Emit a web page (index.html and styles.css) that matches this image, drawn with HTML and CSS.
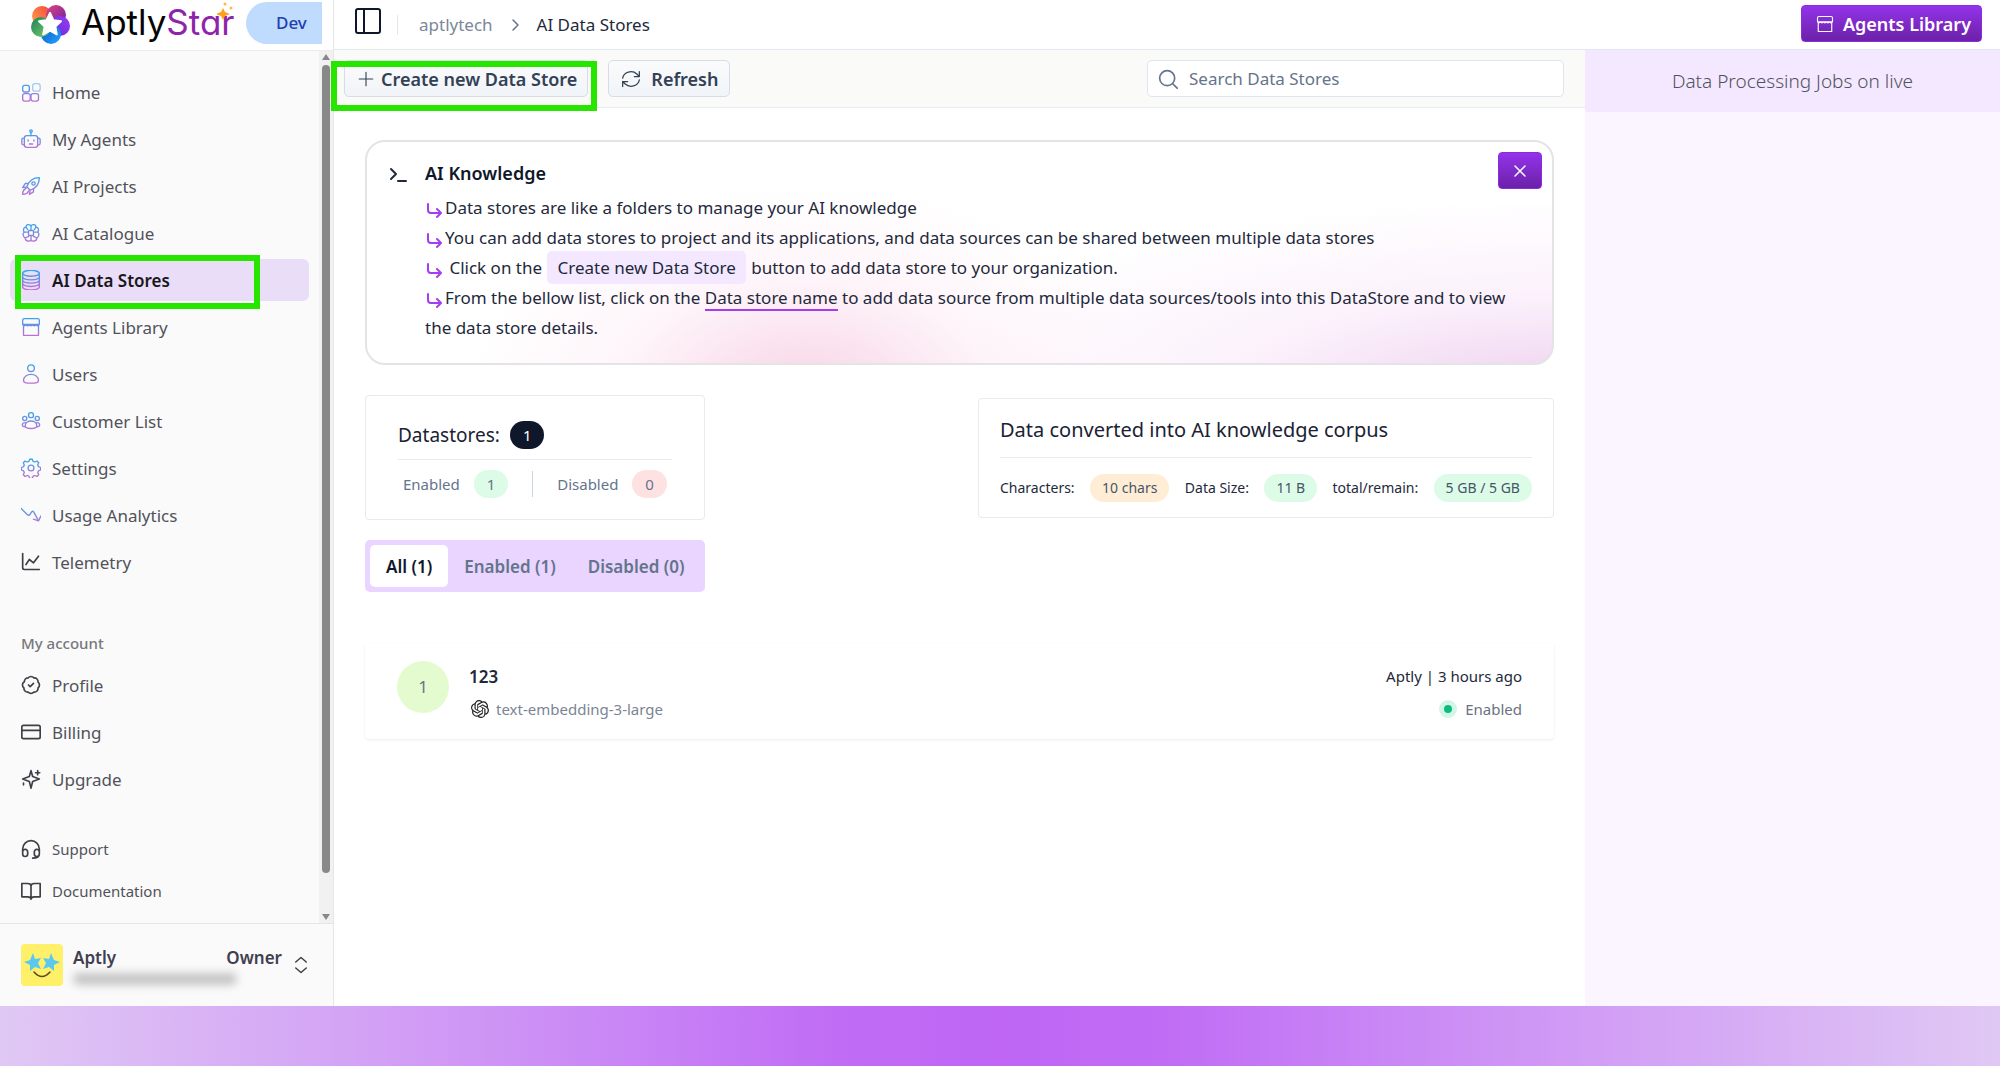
FILE: index.html
```html
<!DOCTYPE html>
<html lang="en">
<head>
    <meta charset="UTF-8">
    <meta name="viewport" content="width=device-width, initial-scale=1.0">
    <title>AI Data Stores - AptlyStar</title>
    <link rel="stylesheet" href="styles.css">
</head>
<body>
    <!-- shared gradient + icon used twice -->
    <svg class="defs" width="0" height="0" aria-hidden="true">
        <defs>
            <linearGradient id="grad" gradientUnits="userSpaceOnUse" x1="12" y1="1" x2="12" y2="23">
                <stop offset="0" stop-color="#2fa8ee"/>
                <stop offset="1" stop-color="#c06fd0"/>
            </linearGradient>
        </defs>
        <symbol id="shop" viewBox="0 0 24 24">
            <path d="M3 10v12h18V10M4 2h16a2 2 0 0 1 2 2v5H2V4a2 2 0 0 1 2-2zM2 9c1 2 3 2 4 0 1 2 3 2 4 0 1 2 3 2 4 0 1 2 3 2 4 0 1 2 3 2 4 0"/>
        </symbol>
    </svg>

    <div class="app">
        <aside class="sidebar">
            <div class="brand">
                <svg class="logo" viewBox="0 0 40 40" aria-hidden="true">
                    <defs>
                        <linearGradient id="l1" x1="0" y1="1" x2="1" y2="0"><stop offset="0" stop-color="#ffa64d"/><stop offset="1" stop-color="#f4433c"/></linearGradient>
                        <linearGradient id="l2" x1="0" y1="0" x2="1" y2="1"><stop offset="0" stop-color="#e0457b"/><stop offset="1" stop-color="#6a1fa8"/></linearGradient>
                        <linearGradient id="l3" x1="1" y1="0" x2="0" y2="1"><stop offset="0" stop-color="#a03af0"/><stop offset="1" stop-color="#5a2be0"/></linearGradient>
                        <linearGradient id="l4" x1="0" y1="0" x2="1" y2="1"><stop offset="0" stop-color="#0a4fc4"/><stop offset="1" stop-color="#22a8ff"/></linearGradient>
                        <linearGradient id="l5" x1="0" y1="0" x2="1" y2="1"><stop offset="0" stop-color="#1b7f5c"/><stop offset="1" stop-color="#7fd06a"/></linearGradient>
                    </defs>
                    <circle cx="12" cy="12" r="10" fill="url(#l1)"/>
                    <circle cx="26" cy="11" r="10" fill="url(#l2)"/>
                    <circle cx="30" cy="22" r="10" fill="url(#l3)"/>
                    <circle cx="21" cy="30" r="10" fill="url(#l4)"/>
                    <circle cx="11" cy="23" r="10" fill="url(#l5)"/>
                    <path fill="#fff" stroke="#fff" stroke-width="2" stroke-linejoin="round" d="M20 9l3.4 7.2 7.6 1-5.6 5.4 1.4 7.8-6.8-3.8-6.8 3.8 1.4-7.8L9 17.2l7.6-1z"/>
                </svg>
                <span class="wordmark">Aptly<b>Star</b>
                    <svg class="sparkle" viewBox="0 0 18 18" aria-hidden="true"><path fill="#ff9f1c" d="M6 6l2 4 5 2-5 2-2 4-2-4-5-2 5-2z"/><circle cx="8" cy="2" r="1.5" fill="#ffb74d"/><circle cx="14" cy="6" r="1.5" fill="#ffb74d"/></svg>
                </span>
                <span class="env">Dev</span>
            </div>

            <div class="scroll">
                <nav class="menu">
                    <a href="#"><svg class="icon g" viewBox="0 0 24 24"><rect x="2" y="4" width="8" height="8" rx="2.5"/><rect x="2" y="14" width="9" height="9" rx="2.5"/><rect x="12" y="14" width="9" height="9" rx="2.5"/><rect x="14" y="2" width="9" height="9" rx="3" opacity=".5"/></svg>Home</a>
                    <a href="#"><svg class="icon g" viewBox="0 0 24 24"><rect x="4" y="8" width="16" height="14" rx="3"/><path d="M12 8V4M4 11H3a2 2 0 0 0-2 2v4a2 2 0 0 0 2 2h1M20 11h1a2 2 0 0 1 2 2v4a2 2 0 0 1-2 2h-1M8.5 13v1.5M15.5 13v1.5M10 18h4"/><circle cx="12" cy="2.5" r="1.5"/></svg>My Agents</a>
                    <a href="#"><svg class="icon g" viewBox="0 0 24 24"><path d="M7 13c2-6 7-11 15-11 0 8-5 13-11 15zM9 9H5l-3 5 5-1M15 15v4l-5 3 1-5M6 15c-3 1-4 4-4 7 3 0 6-1 7-4"/><circle cx="15" cy="9" r="2"/></svg>AI Projects</a>
                    <a href="#"><svg class="icon g" viewBox="0 0 24 24"><path d="M12 4C11 1 6 1 6 5c-3 0-4 4-2 6-3 2-1 6 1 7 0 4 6 5 7 2 1 3 7 2 7-2 2-1 4-5 1-7 2-2 1-6-2-6 0-4-5-4-6-1zM12 4v4M12 16v4M6 5l2 3M18 5l-2 3M4 11h4M20 11h-4M5 18l4-2M19 18l-4-2"/><rect x="9" y="9" width="6" height="6" rx="1"/></svg>AI Catalogue</a>
                    <a href="#" class="active"><svg class="icon g" viewBox="0 0 24 24"><ellipse cx="12" cy="4" rx="10" ry="3.5"/><path d="M2 4v16c0 5 20 5 20 0V4M2 8c0 5 20 5 20 0M2 12c0 5 20 5 20 0M2 16c0 5 20 5 20 0"/></svg>AI Data Stores<span class="mark"></span></a>
                    <a href="#"><svg class="icon g"><use href="#shop"/></svg>Agents Library</a>
                    <a href="#"><svg class="icon g" viewBox="0 0 24 24"><circle cx="12" cy="5" r="4"/><path d="M3 20c0-10 18-10 18 0 0 4-18 4-18 0z"/></svg>Users</a>
                    <a href="#"><svg class="icon g" viewBox="0 0 24 24"><circle cx="12" cy="5" r="3"/><circle cx="4.5" cy="9" r="2.5"/><circle cx="19.5" cy="9" r="2.5"/><path d="M5 18c0-8 14-8 14 0 0 4-14 4-14 0zM5 14c-4 0-5 5 0 5M19 14c4 0 5 5 0 5"/></svg>Customer List</a>
                    <a href="#"><svg class="icon g" viewBox="0 0 24 24"><path d="M9.5 4l1-2.5h3l1 2.5 2 .8 2.7-1.1 2 2-1.1 2.7.8 2 2.6 1v3l-2.6 1-.8 2 1.1 2.7-2 2-2.7-1.1-2 .8-1 2.7h-3l-1-2.7-2-.8-2.7 1.1-2-2 1.1-2.7-.8-2-2.6-1v-3l2.6-1 .8-2-1.1-2.7 2-2 2.7 1.1z"/><circle cx="12" cy="12" r="3.5"/></svg>Settings</a>
                    <a href="#"><svg class="icon g" viewBox="0 0 24 24"><path d="M0 4l8 8q2 1 3-1l2-3q1-1 2 0l5 9M15 17l6 2 3-6"/></svg>Usage Analytics</a>
                    <a href="#"><svg class="icon" viewBox="0 0 24 24"><path d="M2 2v17a2 2 0 0 0 2 2h18M6 15l4-6 5 4 6-8"/></svg>Telemetry</a>
                </nav>

                <h2>My account</h2>
                <nav class="menu">
                    <a href="#"><svg class="icon" viewBox="0 0 24 24"><path d="M4 8a4.500 4.500 0 0 1 4.500-4.500 4.500 4.500 0 0 1 7 0A4.500 4.500 0 0 1 20.500 8.500a4.500 4.500 0 0 1 0 7 4.500 4.500 0 0 1-5 5 4.500 4.500 0 0 1-7 0 4.500 4.500 0 0 1-5-5A4.500 4.500 0 0 1 4 8zM9 12l2 2 4-4"/></svg>Profile</a>
                    <a href="#"><svg class="icon" viewBox="0 0 24 24"><rect x="1" y="4" width="22" height="16" rx="2"/><path d="M1 10h22"/></svg>Billing</a>
                    <a href="#"><svg class="icon" viewBox="0 0 24 24"><path d="M12 2l2 7 8 3-8 3-2 8-2-8-8-3 8-3zM20 2v5M17.5 4.5h5M3 17v2"/></svg>Upgrade</a>
                </nav>
                <nav class="menu small">
                    <a href="#"><svg class="icon" viewBox="0 0 24 24"><path d="M2 12a10 10 0 0 1 20 0v6a3 3 0 0 1-6 0v-2a3 3 0 0 1 6-1M2 12v6a3 3 0 0 0 6 0v-2a3 3 0 0 0-6-1M22 18c0 3-3 5-8 5"/></svg>Support</a>
                    <a href="#"><svg class="icon" viewBox="0 0 24 24"><path d="M12 6c0-2-2-3-4-3H1v16h7c2 0 4 1 4 3 0-2 2-3 4-3h7V3h-7c-2 0-4 1-4 3zv16"/></svg>Documentation</a>
                </nav>
                <div class="scrollbar" aria-hidden="true"><i class="up"></i><i class="thumb"></i><i class="down"></i></div>
            </div>

            <div class="user">
                <svg class="avatar" viewBox="0 0 42 42" aria-hidden="true">
                    <rect width="42" height="42" rx="4" fill="#fff06a"/>
                    <g fill="#5cc8ef"><path d="M12 9l2 6 6-1-3 5 3 6-6-2-5 4v-6l-6-3 6-2z"/><path d="M30 9l-2 6-6-1 3 5-3 6 6-2 5 4v-6l6-3-6-2z"/></g>
                    <path d="M13 28q8 9 16 0" fill="none" stroke="#5c4a1c" stroke-width="1.5"/>
                </svg>
                <div class="who">
                    <div class="names"><span>Aptly</span><span>Owner</span></div>
                    <div class="hidden-mail"></div>
                </div>
                <svg class="icon" viewBox="0 0 24 24"><path d="M5 8l7-6 7 6M5 16l7 6 7-6"/></svg>
            </div>
        </aside>

        <div class="page">
            <header class="topbar">
                <button class="toggle" aria-label="Toggle sidebar"><svg viewBox="0 0 28 28"><rect x="2" y="2" width="24" height="24" rx="2"/><path d="M10 2v24"/></svg></button>
                <div class="crumbs">
                    <a href="#">aptlytech</a>
                    <svg viewBox="0 0 12 12"><path d="M4 1l5 5-5 5"/></svg>
                    <span>AI Data Stores</span>
                </div>
                <button class="purple library"><svg><use href="#shop"/></svg>Agents Library</button>
            </header>

            <div class="columns">
                <main>
                    <div class="toolbar">
                        <button class="btn create"><svg viewBox="0 0 24 24"><path d="M12 3v18M3 12h18"/></svg>Create new Data Store<span class="mark"></span></button>
                        <button class="btn refresh"><svg viewBox="0 0 24 24"><path d="M22 3v6h-6M2 21v-6h6M2 11a10 9 0 0 1 17-5l3 3M22 13a10 9 0 0 1-17 5l-3-3"/></svg>Refresh</button>
                        <div class="search">
                            <label for="q" aria-label="Search Data Stores"><svg viewBox="0 0 24 24"><circle cx="11" cy="11" r="9"/><path d="M18 18l5 5"/></svg></label>
                            <input type="text" id="q" placeholder="Search Data Stores">
                        </div>
                    </div>

                    <div class="content">
                        <section class="banner">
                            <svg class="prompt" viewBox="0 0 18 18"><path d="M2 3l5 5-5 5M9 15h8"/></svg>
                            <div class="tips">
                                <h1>AI Knowledge</h1>
                                <p><svg viewBox="0 0 16 16"><path d="M2 1v6a3 3 0 0 0 3 3h9M11 6l4 4-4 4"/></svg>Data stores are like a folders to manage your AI knowledge</p>
                                <p><svg viewBox="0 0 16 16"><path d="M2 1v6a3 3 0 0 0 3 3h9M11 6l4 4-4 4"/></svg>You can add data stores to project and its applications, and data sources can be shared between multiple data stores</p>
                                <p><svg viewBox="0 0 16 16"><path d="M2 1v6a3 3 0 0 0 3 3h9M11 6l4 4-4 4"/></svg> Click on the <span class="chip">Create new Data Store</span> button to add data store to your organization.</p>
                                <p><svg viewBox="0 0 16 16"><path d="M2 1v6a3 3 0 0 0 3 3h9M11 6l4 4-4 4"/></svg>From the bellow list, click on the <span class="under">Data store name</span> to add data source from multiple data sources/tools into this DataStore and to view the data store details.</p>
                            </div>
                            <button class="purple close" aria-label="Close"><svg viewBox="0 0 14 14"><path d="M2 2l10 10M12 2L2 12"/></svg></button>
                        </section>

                        <div class="stats">
                            <section class="card counts">
                                <div class="title">Datastores: <span class="pill dark">1</span></div>
                                <div class="row">
                                    <span>Enabled</span><span class="pill green">1</span>
                                    <i></i>
                                    <span>Disabled</span><span class="pill red">0</span>
                                </div>
                            </section>
                            <section class="card corpus">
                                <div class="title">Data converted into AI knowledge corpus</div>
                                <div class="row">
                                    <span>Characters:</span><span class="pill orange">10 chars</span>
                                    <span>Data Size:</span><span class="pill green">11 B</span>
                                    <span>total/remain:</span><span class="pill green">5 GB / 5 GB</span>
                                </div>
                            </section>
                        </div>

                        <div class="tabs">
                            <button class="on">All (1)</button>
                            <button>Enabled (1)</button>
                            <button>Disabled (0)</button>
                        </div>

                        <article class="store">
                            <span class="num">1</span>
                            <div class="info">
                                <a href="#">123</a>
                                <div class="model">
                                    <svg viewBox="0 0 24 24"><path d="M22.2819 9.8211a5.9847 5.9847 0 0 0-.5157-4.9108 6.0462 6.0462 0 0 0-6.5098-2.9A6.0651 6.0651 0 0 0 4.9807 4.1818a5.9847 5.9847 0 0 0-3.9977 2.9 6.0462 6.0462 0 0 0 .7427 7.0966 5.98 5.98 0 0 0 .511 4.9107 6.051 6.051 0 0 0 6.5146 2.9001A5.9847 5.9847 0 0 0 13.2599 24a6.0557 6.0557 0 0 0 5.7718-4.2058 5.9894 5.9894 0 0 0 3.9977-2.9001 6.0557 6.0557 0 0 0-.7475-7.0729zm-9.022 12.6081a4.4755 4.4755 0 0 1-2.8764-1.0408l.1419-.0804 4.7783-2.7582a.7948.7948 0 0 0 .3927-.6813v-6.7369l2.02 1.1686a.071.071 0 0 1 .038.052v5.5826a4.504 4.504 0 0 1-4.4945 4.4944zm-9.6607-4.1254a4.4708 4.4708 0 0 1-.5346-3.0137l.142.0852 4.783 2.7582a.7712.7712 0 0 0 .7806 0l5.8428-3.3685v2.3324a.0804.0804 0 0 1-.0332.0615L9.74 19.9502a4.4992 4.4992 0 0 1-6.1408-1.6464zM2.3408 7.8956a4.485 4.485 0 0 1 2.3655-1.9728V11.6a.7664.7664 0 0 0 .3879.6765l5.8144 3.3543-2.0201 1.1685a.0757.0757 0 0 1-.071 0l-4.8303-2.7865A4.504 4.504 0 0 1 2.3408 7.872zm16.5963 3.8558L13.1038 8.364 15.1192 7.2a.0757.0757 0 0 1 .071 0l4.8303 2.7913a4.4944 4.4944 0 0 1-.6765 8.1042v-5.6772a.79.79 0 0 0-.407-.667zm2.0107-3.0231l-.142-.0852-4.7735-2.7818a.7759.7759 0 0 0-.7854 0L9.409 9.2297V6.8974a.0662.0662 0 0 1 .0284-.0615l4.8303-2.7866a4.4992 4.4992 0 0 1 6.6802 4.66zM8.3065 12.863l-2.02-1.1638a.0804.0804 0 0 1-.038-.0567V6.0742a4.4992 4.4992 0 0 1 7.3757-3.4537l-.142.0805L8.704 5.459a.7948.7948 0 0 0-.3927.6813zm1.0976-2.3654l2.602-1.4998 2.6069 1.4998v2.9994l-2.5974 1.4997-2.6067-1.4997Z"/></svg>
                                    text-embedding-3-large
                                </div>
                            </div>
                            <div class="meta">
                                <div>Aptly | 3 hours ago</div>
                                <div class="state"><i></i>Enabled</div>
                            </div>
                        </article>
                    </div>
                </main>

                <aside class="jobs">
                    <h2>Data Processing Jobs on live</h2>
                </aside>
            </div>
        </div>
    </div>
    <footer class="strip"></footer>
</body>
</html>
```

FILE: styles.css
```css
* { box-sizing: border-box; }
body {
    margin: 0;
    min-height: 100vh;
    display: flex;
    flex-direction: column;
    font-family: "Noto Sans", "Open Sans", sans-serif;
    font-size: 17px;
    color: #1e293b;
    background: #fff;
}
h1, h2, p { margin: 0; }
a { color: inherit; text-decoration: none; }
button { font: inherit; cursor: pointer; }
svg { fill: none; stroke: currentColor; stroke-width: 2; stroke-linecap: round; stroke-linejoin: round; flex: none; }
.defs { position: absolute; }
.app { flex: 1; display: flex; }

/* green frames round the highlighted controls */
.mark { position: absolute; border: 6px solid #26e600; z-index: 5; pointer-events: none; }

/* sidebar */
.sidebar {
    width: 334px;
    flex: none;
    display: flex;
    flex-direction: column;
    background: #fafafa;
    border-right: 1px solid #e5e7eb;
}
.brand {
    height: 51px;
    display: flex;
    align-items: flex-start;
    padding-left: 30px;
    background: #fff;
    border-bottom: 1px solid #ececec;
}
.logo { width: 40px; height: 40px; margin-top: 4px; stroke: none; }
.wordmark {
    position: relative;
    flex: 1;
    margin-left: 11px;
    font-family: Inter, sans-serif;
    font-feature-settings: "cv11";
    font-size: 35px;
    line-height: 44px;
    color: #050505;
}
.wordmark b { font-weight: 400; color: #8e24aa; }
.sparkle { position: absolute; left: 136px; top: 2px; width: 18px; height: 18px; stroke: none; }
.env {
    width: 76px;
    height: 42px;
    margin: 2px 11px 0 0;
    padding-left: 30px;
    line-height: 42px;
    border-radius: 21px 0 0 21px;
    background: #bfdbfe;
    color: #1e40af;
    font-weight: 500;
}
.scroll { flex: 1; position: relative; padding: 20px 24px 0 10px; }
.menu { display: flex; flex-direction: column; gap: 5px; }
.menu a {
    position: relative;
    display: flex;
    align-items: center;
    gap: 11px;
    height: 42px;
    padding-left: 11px;
    border-radius: 6px;
    color: #52525b;
}
.icon { width: 20px; height: 20px; color: #3f3f46; }
.g { stroke: url(#grad); stroke-width: 1.6; }
.menu a.active { background: #eaddf7; color: #18181b; font-weight: 600; }
.menu .mark { inset: -4px 49px -8px 5px; }
.scroll h2 { margin: 45px 0 6px 11px; font-size: 15px; font-weight: 500; line-height: 30px; color: #77777d; }
.small { margin-top: 28px; gap: 0; }
.small a { font-size: 15px; }
.scrollbar {
    position: absolute;
    inset: 0 0 0 auto;
    width: 14px;
    padding: 3px 0;
    display: flex;
    flex-direction: column;
    align-items: center;
    background: #f1f1f1;
}
.up { border: 4px solid transparent; border-top: 0; border-bottom: 6px solid #888; }
.down { border: 4px solid transparent; border-bottom: 0; border-top: 6px solid #888; }
.thumb { width: 8px; flex: 1; margin: 5px 0 41px; border-radius: 4px; background: #888; }
.user {
    display: flex;
    align-items: center;
    height: 83px;
    padding: 0 23px 0 21px;
    border-top: 1px solid #e2e5ea;
}
.avatar { width: 42px; height: 42px; stroke: none; }
.who { flex: 1; margin: 0 10px; }
.names { display: flex; justify-content: space-between; font-weight: 600; line-height: 24px; color: #3f3f50; }
.hidden-mail { width: 164px; height: 12px; margin-top: 3px; border-radius: 6px; background: #c4c4c4; filter: blur(4px); }
.user .icon { width: 18px; }

/* top bar */
.page { flex: 1; min-width: 0; display: flex; flex-direction: column; }
.topbar {
    height: 50px;
    display: flex;
    align-items: center;
    padding: 0 18px 0 20px;
    border-bottom: 1px solid #e2e8f0;
}
.toggle { display: flex; padding: 0; margin-bottom: 8px; border: 0; background: none; color: #0f172a; }
.toggle svg { width: 28px; height: 28px; }
.crumbs {
    display: flex;
    align-items: center;
    flex: 1;
    gap: 16px;
    margin-left: 15px;
    padding-left: 21px;
    line-height: 20px;
    border-left: 1px solid #e2e8f0;
}
.crumbs a { color: #7b8799; }
.crumbs svg { width: 12px; height: 12px; color: #64748b; stroke-width: 1.5; }
.purple {
    border: 1px solid #8b2be0;
    border-radius: 4px;
    background: linear-gradient(#9333ea, #6b21a8);
    color: #fff;
}
.library { display: flex; align-items: center; gap: 9px; height: 37px; margin-bottom: 2px; padding: 0 10px 0 14px; font-size: 18px; font-weight: 600; }
.library svg { width: 18px; height: 20px; stroke-width: 1.5; }

/* main column */
.columns { flex: 1; display: flex; }
main { flex: 1; min-width: 0; }
.toolbar {
    display: flex;
    align-items: center;
    height: 58px;
    padding: 0 21px 0 10px;
    background: #fafaf9;
    border-bottom: 1px solid #e8ecf2;
}
.btn {
    position: relative;
    display: flex;
    align-items: center;
    height: 37px;
    margin: 0;
    border: 1px solid #d5dde7;
    border-radius: 5px;
    background: linear-gradient(#fafbfc, #f1f4f8);
    color: #334155;
    font-size: 18px;
    font-weight: 600;
}
.btn svg { width: 20px; height: 20px; stroke-width: 1.5; }
.create { padding: 0 10px 0 12px; gap: 6px; }
.create svg { width: 18px; }
.create .mark { inset: 0 -10px -15px -14px; }
.refresh { margin-left: 20px; padding: 0 11px 0 12px; gap: 10px; }
.search {
    display: flex;
    align-items: center;
    width: 417px;
    height: 37px;
    margin-left: auto;
    padding: 0 10px;
    border: 1px solid #dfe5ee;
    border-radius: 5px;
    background: #fff;
    color: #64748b;
}
.search label { display: flex; }
.search svg { width: 20px; height: 20px; }
.search input { flex: 1; min-width: 0; margin-left: 11px; padding: 0; border: 0; outline: 0; background: none; font: inherit; }
.search input::placeholder { color: #64748b; opacity: 1; }
.content { padding: 32px 31px 0; }
.banner {
    display: flex;
    align-items: flex-start;
    height: 225px;
    padding: 10px;
    border: 2px solid #e4e4e7;
    border-radius: 20px;
    background:
        radial-gradient(ellipse 340px 210px at 37% 114%, #f8d3e6 0%, rgba(253, 238, 246, .6) 55%, rgba(255, 255, 255, 0) 100%),
        radial-gradient(ellipse 640px 190px at 100% 112%, #efd2ef 0%, rgba(250, 236, 250, .7) 50%, rgba(255, 255, 255, 0) 100%),
        #fff;
}
.prompt { width: 18px; height: 18px; margin: 14px 16px 0 12px; }
.tips { flex: 1; min-width: 0; margin-right: -28px; padding-left: 2px; line-height: 30px; }
.tips h1 { padding: 6px 0 5px; font-size: 18px; font-weight: 600; line-height: 30px; color: #0f172a; }
.tips p svg { width: 16px; height: 16px; margin: 0 3px 0 1px; vertical-align: -5px; color: #a33ef0; }
.chip { margin: 0 1px; padding: 5px 10px; border-radius: 5px; background: #f3e8ff; }
.under { border-bottom: 2px solid #a33ef0; }
.close { display: flex; align-items: center; justify-content: center; width: 44px; height: 37px; padding: 0; }
.close svg { width: 14px; height: 14px; stroke-width: 1.5; }

.stats { display: flex; justify-content: space-between; align-items: center; margin-top: 30px; }
.card { border: 1px solid #e6ebf2; border-radius: 4px; }
.title { font-size: 20px; color: #1a2233; border-bottom: 1px solid #e6ebf2; }
.row { display: flex; align-items: center; font-size: 14px; }
.pill { padding: 0 12px; border-radius: 14px; font-size: 14px; line-height: 28px; color: #475569; }
.dark { background: #0f172a; color: #fff; }
.green { background: #dcfce7; }
.red { background: #fee2e2; }
.orange { background: #ffedd5; }
.counts { width: 340px; height: 125px; padding: 25px 32px; }
.counts .title { display: flex; align-items: center; gap: 10px; padding-bottom: 10px; font-size: 19px; line-height: 28px; }
.counts .row { justify-content: space-between; padding: 10px 5px 0; font-size: 15px; color: #64748b; }
.counts .pill { padding: 0 13px; font-size: 15px; color: #64748b; }
.counts .pill.dark { color: #fff; }
.row i { width: 1px; height: 26px; margin: 0 10px; background: #cbd5e1; }
.corpus { width: 576px; height: 120px; padding: 15px 21px; }
.corpus .title { padding-bottom: 11px; line-height: 32px; }
.corpus .row { justify-content: space-between; padding-top: 16px; }

.tabs { display: flex; width: 340px; height: 52px; margin-top: 20px; padding: 5px; border-radius: 5px; background: #e9d5ff; }
.tabs button { flex: none; padding: 0 16px; border: 0; border-radius: 5px; background: none; color: #64748b; font-weight: 600; }
.tabs .on { background: #fff; color: #0f172a; }

.store {
    display: flex;
    align-items: center;
    height: 96px;
    margin-top: 51px;
    padding: 0 32px;
    border-radius: 4px;
    box-shadow: 0 1px 3px rgba(0, 0, 0, .08);
}
.num { width: 52px; margin-bottom: 8px; line-height: 52px; border-radius: 50%; background: #e4fbcf; color: #64748b; text-align: center; }
.info { flex: 1; margin-left: 20px; padding-top: 3px; line-height: 33px; }
.info a { font-weight: 600; }
.model { display: flex; align-items: center; gap: 7px; font-size: 15px; color: #7b8494; }
.model svg { width: 18px; height: 18px; margin-left: 2px; fill: #222; stroke: none; }
.meta { padding-top: 3px; font-size: 15px; line-height: 33px; text-align: right; }
.state { display: flex; align-items: center; justify-content: flex-end; gap: 8px; color: #6b7280; }
.state i { width: 18px; height: 18px; border: 5px solid #d1f5e6; border-radius: 50%; background: #10b981; }

/* jobs column */
.jobs { width: 415px; flex: none; background: #faf5ff; }
.jobs h2 { background: #f3e8ff; font-size: 19px; font-weight: 300; line-height: 62px; text-align: center; color: #52525b; }

.strip { height: 60px; background: linear-gradient(90deg, #e0c8f4, #cc8ff5 27%, #c06cf5 42%, #bf66f5 50%, #c06cf5 58%, #cc8ff5 73%, #e0c8f4); }
```
